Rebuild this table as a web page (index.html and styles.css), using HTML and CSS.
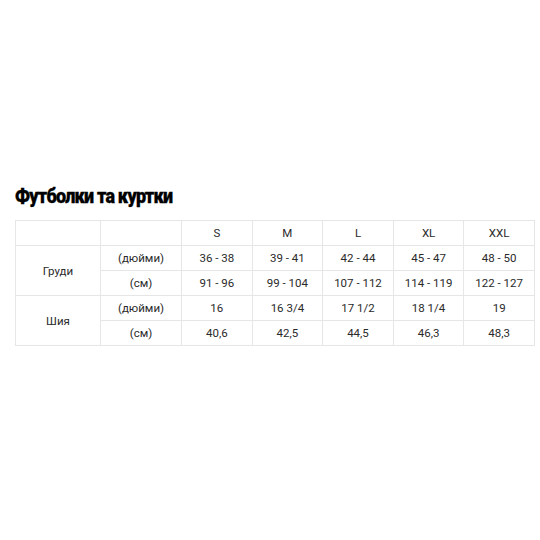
FILE: index.html
```html
<!DOCTYPE html>
<html lang="uk">
<head>
<meta charset="utf-8">
<link rel="stylesheet" href="styles.css">
</head>
<body>
<div class="page">
  <h2 class="title">Футболки та куртки</h2>
  <table class="sizes">
    <colgroup>
      <col class="c-name"><col class="c-unit"><col class="c-size"><col class="c-size"><col class="c-size"><col class="c-size"><col class="c-size">
    </colgroup>
    <tr><td></td><td></td><td>S</td><td>M</td><td>L</td><td>XL</td><td>XXL</td></tr>
    <tr><td rowspan="2">Груди</td><td>(дюйми)</td><td>36 - 38</td><td>39 - 41</td><td>42 - 44</td><td>45 - 47</td><td>48 - 50</td></tr>
    <tr><td>(см)</td><td>91 - 96</td><td>99 - 104</td><td>107 - 112</td><td>114 - 119</td><td>122 - 127</td></tr>
    <tr><td rowspan="2">Шия</td><td>(дюйми)</td><td>16</td><td>16 3/4</td><td>17 1/2</td><td>18 1/4</td><td>19</td></tr>
    <tr><td>(см)</td><td>40,6</td><td>42,5</td><td>44,5</td><td>46,3</td><td>48,3</td></tr>
  </table>
</div>
</body>
</html>
```
FILE: styles.css
```css
html, body { margin: 0; padding: 0; background: #fff; }
.page {
  padding: 184px 6px 0 15px;
  width: 519px;
  font-family: Roboto, "Noto Sans", sans-serif;
  color: #2a2a2a;
}
.title {
  margin: 0 0 12px 0;
  font-family: Roboto, sans-serif;
  font-weight: 900;
  font-size: 20px;
  line-height: 24px;
  letter-spacing: -0.9px;
  color: #000;
  transform: scaleX(0.9);
  transform-origin: left center;
  white-space: nowrap;
  -webkit-text-stroke: 0.3px #000;
}
.sizes {
  border-collapse: collapse;
  width: 519px;
  table-layout: fixed;
  font-size: 11.5px;
}
.c-name { width: 85px; }
.c-unit { width: 81px; }
.c-size { width: 70.6px; }
.sizes td {
  border: 1px solid #e6e6e6;
  text-align: center;
  vertical-align: middle;
  height: 24px;
  padding: 0;
  line-height: 14px;
}
```
